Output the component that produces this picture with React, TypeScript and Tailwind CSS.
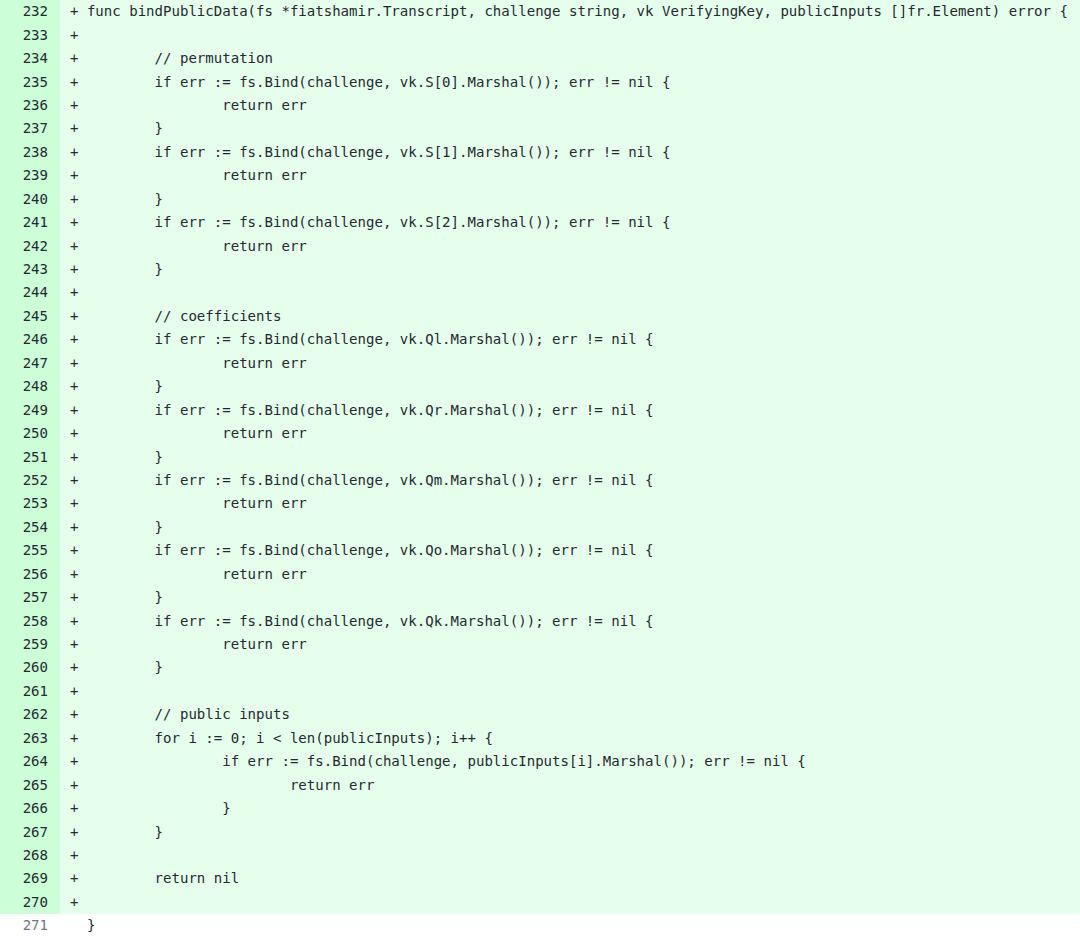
import React from "react";

const T = "        ";
const lines: string[] = [
  "func bindPublicData(fs *fiatshamir.Transcript, challenge string, vk VerifyingKey, publicInputs []fr.Element) error {",
  "",
  T + "// permutation",
  T + "if err := fs.Bind(challenge, vk.S[0].Marshal()); err != nil {",
  T + T + "return err",
  T + "}",
  T + "if err := fs.Bind(challenge, vk.S[1].Marshal()); err != nil {",
  T + T + "return err",
  T + "}",
  T + "if err := fs.Bind(challenge, vk.S[2].Marshal()); err != nil {",
  T + T + "return err",
  T + "}",
  "",
  T + "// coefficients",
  T + "if err := fs.Bind(challenge, vk.Ql.Marshal()); err != nil {",
  T + T + "return err",
  T + "}",
  T + "if err := fs.Bind(challenge, vk.Qr.Marshal()); err != nil {",
  T + T + "return err",
  T + "}",
  T + "if err := fs.Bind(challenge, vk.Qm.Marshal()); err != nil {",
  T + T + "return err",
  T + "}",
  T + "if err := fs.Bind(challenge, vk.Qo.Marshal()); err != nil {",
  T + T + "return err",
  T + "}",
  T + "if err := fs.Bind(challenge, vk.Qk.Marshal()); err != nil {",
  T + T + "return err",
  T + "}",
  "",
  T + "// public inputs",
  T + "for i := 0; i < len(publicInputs); i++ {",
  T + T + "if err := fs.Bind(challenge, publicInputs[i].Marshal()); err != nil {",
  T + T + T + "return err",
  T + T + "}",
  T + "}",
  "",
  T + "return nil",
  "",
];

export default function App() {
  return (
    <div
      className="w-[1080px] h-[942px] bg-white overflow-hidden text-[14.05px] text-[#24292f]"
      style={{ fontFamily: '"DejaVu Sans Mono", monospace' }}
    >
      <div className="flex flex-col">
        {lines.map((l, i) => (
          <div key={i} className="flex h-[23.45px] items-center">
            <div className="w-[60px] h-full bg-[#ccffd8] flex items-center justify-end pr-[12px] text-[#24292f]">
              {232 + i}
            </div>
            <div className="flex-1 h-full bg-[#e6ffec] flex items-center pl-[10px] whitespace-pre">
              {"+ " + l}
            </div>
          </div>
        ))}
        <div className="flex h-[23.45px] items-center">
          <div className="w-[60px] h-full flex items-center justify-end pr-[12px] text-[#6e7781]">
            271
          </div>
          <div className="flex-1 h-full flex items-center pl-[10px] whitespace-pre">
            {"  }"}
          </div>
        </div>
      </div>
    </div>
  );
}
